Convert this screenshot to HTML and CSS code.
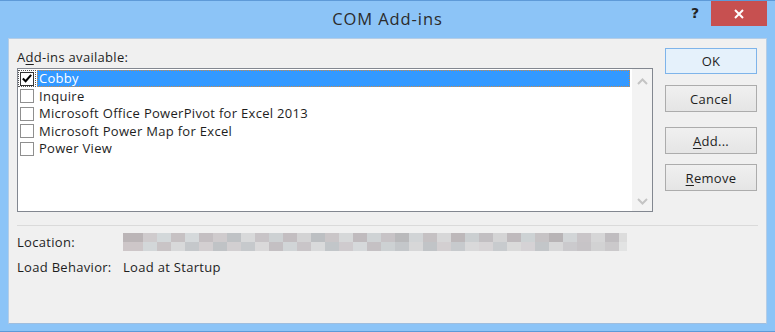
FILE: index.html
```html
<!DOCTYPE html>
<html>

<head>
  <title>COM Add-ins</title>
  <link rel="stylesheet" href="styles.css">
</head>

<body>
  <div class="window">
    <div class="titlebar">
      <span class="title">COM Add-ins</span>
      <span class="help">?</span>
      <span class="close">
        <svg width="12" height="12" viewBox="0 0 12 12">
          <path d="M2 2 L10 10 M10 2 L2 10" stroke="#fff" stroke-width="2" fill="none" />
        </svg>
      </span>
    </div>

    <div class="client">
      <div class="top">
        <div class="left">
          <div class="caption">A<u>d</u>d-ins available:</div>
          <div class="list">
            <div class="items">
              <div class="row selected">
                <span class="focus"><span class="box">
                    <svg width="13" height="13" viewBox="0 0 13 13">
                      <path d="M2 6.5 L5 9.5 L11 2.5" stroke="#000" stroke-width="2.2" fill="none" />
                    </svg>
                  </span></span>
                <span class="name">Cobby</span>
              </div>
              <div class="row"><span class="focus"><span class="box"></span></span><span class="name">Inquire</span></div>
              <div class="row"><span class="focus"><span class="box"></span></span><span class="name">Microsoft Office PowerPivot for Excel 2013</span></div>
              <div class="row"><span class="focus"><span class="box"></span></span><span class="name">Microsoft Power Map for Excel</span></div>
              <div class="row"><span class="focus"><span class="box"></span></span><span class="name">Power View</span></div>
            </div>
            <div class="scrollbar">
              <svg width="11" height="7" viewBox="0 0 11 7">
                <path d="M1 6 L5.5 1.5 L10 6" stroke="#c4c4c4" stroke-width="2" fill="none" />
              </svg>
              <svg width="11" height="7" viewBox="0 0 11 7">
                <path d="M1 1 L5.5 5.5 L10 1" stroke="#c4c4c4" stroke-width="2" fill="none" />
              </svg>
            </div>
          </div>
        </div>

        <div class="buttons">
          <button type="button" class="btn default">OK</button>
          <button type="button" class="btn">Cancel</button>
          <button type="button" class="btn spaced"><u>A</u>dd...</button>
          <button type="button" class="btn"><u>R</u>emove</button>
        </div>
      </div>

      <div class="separator"></div>

      <div class="info">
        <div class="info-row">
          <span class="info-label">Location:</span>
          <span class="blurred"></span>
        </div>
        <div class="info-row">
          <span class="info-label">Load Behavior:</span>
          <span>Load at Startup</span>
        </div>
      </div>
    </div>
  </div>
</body>

</html>
```

FILE: styles.css
```css
body {
  margin: 0;
  font-family: "Open Sans", "Noto Sans", sans-serif;
  font-size: 13px;
  letter-spacing: 0.3px;
  color: #1e1e1e;
}

.window {
  width: 775px;
  height: 332px;
  box-sizing: border-box;
  background: #8cc4f7;
  border-top: 1px solid #5e9ad8;
  border-bottom: 1px solid #5e9ad8;
}

/* title bar */
.titlebar {
  height: 37px;
  display: flex;
  align-items: flex-start;
  justify-content: center;
  position: relative;
}

.title {
  font-size: 16.5px;
  letter-spacing: 0.9px;
  color: #2b2b2b;
  margin-top: 6px;
}

.help {
  position: absolute;
  left: 691px;
  top: 4px;
  font-family: "DejaVu Sans", sans-serif;
  font-weight: bold;
  font-size: 14px;
  color: #222;
}

.close {
  position: absolute;
  left: 711px;
  top: 0;
  width: 56px;
  height: 25px;
  background: #c75050;
  display: flex;
  align-items: center;
  justify-content: center;
}

/* dialog body */
.client {
  margin: 0 8px;
  height: 286px;
  box-sizing: border-box;
  background: #f0f0f0;
  border: 1px solid #b5cde6;
  border-bottom-color: #9fbedf;
  padding: 9px 9px 0 8px;
}

.top {
  display: flex;
  gap: 12px;
}

.left {
  flex: 1;
}

.caption {
  height: 20px;
  line-height: 19px;
}

u {
  text-decoration-thickness: 1px;
  text-underline-offset: 2px;
}

.list {
  height: 144px;
  box-sizing: border-box;
  border: 1px solid #828790;
  background: #fff;
  display: flex;
}

.items {
  flex: 1;
  padding: 1px 2px 0 0;
}

.row {
  height: 17.5px;
  display: flex;
  align-items: center;
}

.focus {
  width: 18px;
  height: 17px;
  box-sizing: border-box;
  display: flex;
  align-items: center;
  justify-content: center;
  margin-right: 1px;
}

.box {
  width: 14px;
  height: 14px;
  box-sizing: border-box;
  border: 1px solid #8f8f8f;
  background: #fff;
  display: flex;
  align-items: center;
  justify-content: center;
}

.name {
  flex: 1;
  height: 17px;
  line-height: 17px;
  padding-left: 2px;
  box-sizing: border-box;
}

.selected .focus {
  border: 1px dotted #555;
}

.selected .box {
  border-color: #333;
}

.selected .name {
  background: #3399ff;
  color: #fff;
  border: 1px dotted #c98a4a;
  line-height: 15px;
  padding-left: 1px;
}

.scrollbar {
  width: 20px;
  background: #f3f3f3;
  display: flex;
  flex-direction: column;
  justify-content: space-between;
  align-items: center;
  padding: 9px 0 6px;
  box-sizing: border-box;
}

/* buttons */
.buttons {
  width: 92px;
  display: flex;
  flex-direction: column;
  gap: 10px;
}

.btn {
  height: 27px;
  font-family: "Open Sans", "Noto Sans", sans-serif;
  font-size: 13px;
  letter-spacing: 0.3px;
  color: #1e1e1e;
  background: linear-gradient(#f0f0f0, #e5e5e5);
  border: 1px solid #acacac;
  padding: 0;
}

.btn.default {
  height: 26px;
  margin-bottom: 1px;
  background: #e5f1fb;
  border-color: #7eb4ea;
}

.btn.spaced {
  margin-top: 5px;
}

.separator {
  height: 1px;
  background: #dadada;
  margin: 13px -1px 0 0;
}

/* details */
.info {
  padding-top: 3px;
}

.info-row {
  height: 25px;
  display: flex;
  align-items: center;
}

.info-label {
  width: 106px;
}

.blurred {
  width: 504px;
  height: 18px;
  background:
    linear-gradient(90deg, #bbb5b7 0 20px, #cfcbcd 20px 34px, #d3d8da 34px 48px, #c6c1c3 48px 62px, #d5d9db 62px 76px, #c4bfc2 76px 90px, #cfcbcd 90px 104px, #bfc2c5 104px 118px, #d8d9da 118px 132px, #c8c4c7 132px 146px, #cdd1d3 146px 160px, #c3bec1 160px 174px, #d3d3d4 174px 188px, #bcbfc2 188px 202px, #cac6c8 202px 216px, #d6d8d9 216px 230px, #c0bbbe 230px 244px, #cfd3d5 244px 258px, #c7c3c6 258px 272px, #b9b9bb 272px 286px, #d1d4d6 286px 300px, #c5c1c3 300px 314px, #d7d7d8 314px 328px, #bdb8ba 328px 342px, #cbcfd1 342px 356px, #c2bfc2 356px 370px, #d4d4d5 370px 384px, #bfbabd 384px 398px, #cdd2d4 398px 412px, #c6c3c5 412px 426px, #b8b4b6 426px 440px, #d2d5d7 440px 454px, #c9c5c8 454px 468px, #d6d6d7 468px 482px, #c0bdc0 482px 496px, #dcdcdc 496px 504px) top / 100% 9px no-repeat,
    linear-gradient(90deg, #cdc6c8 0 20px, #d3d7d9 20px 34px, #c9c4c6 34px 48px, #d8d9da 48px 62px, #c5c8cb 62px 76px, #d3cfd1 76px 90px, #c0c3c6 90px 104px, #d2cfd1 104px 118px, #c6c9cc 118px 132px, #dad9da 132px 146px, #c4c0c3 146px 160px, #d1d5d7 160px 174px, #c9c5c8 174px 188px, #d9dadb 188px 202px, #c2c6c9 202px 216px, #cfcbce 216px 230px, #d6d9db 230px 244px, #c5c1c4 244px 258px, #cdd1d3 258px 272px, #c4c7ca 272px 286px, #d7d7d8 286px 300px, #c1c4c7 300px 314px, #d3cfd1 314px 328px, #c7cacd 328px 342px, #d9d9da 342px 356px, #d7d4d6 356px 370px, #c8cbce 370px 384px, #dadada 384px 398px, #d5d2d5 398px 412px, #c3c6c9 412px 426px, #d8d8d9 426px 440px, #cbcacd 440px 454px, #c7c4c7 454px 468px, #d2d2d3 468px 482px, #cbc9cb 482px 496px, #e2e3e3 496px 504px) bottom / 100% 9px no-repeat;
}
```
